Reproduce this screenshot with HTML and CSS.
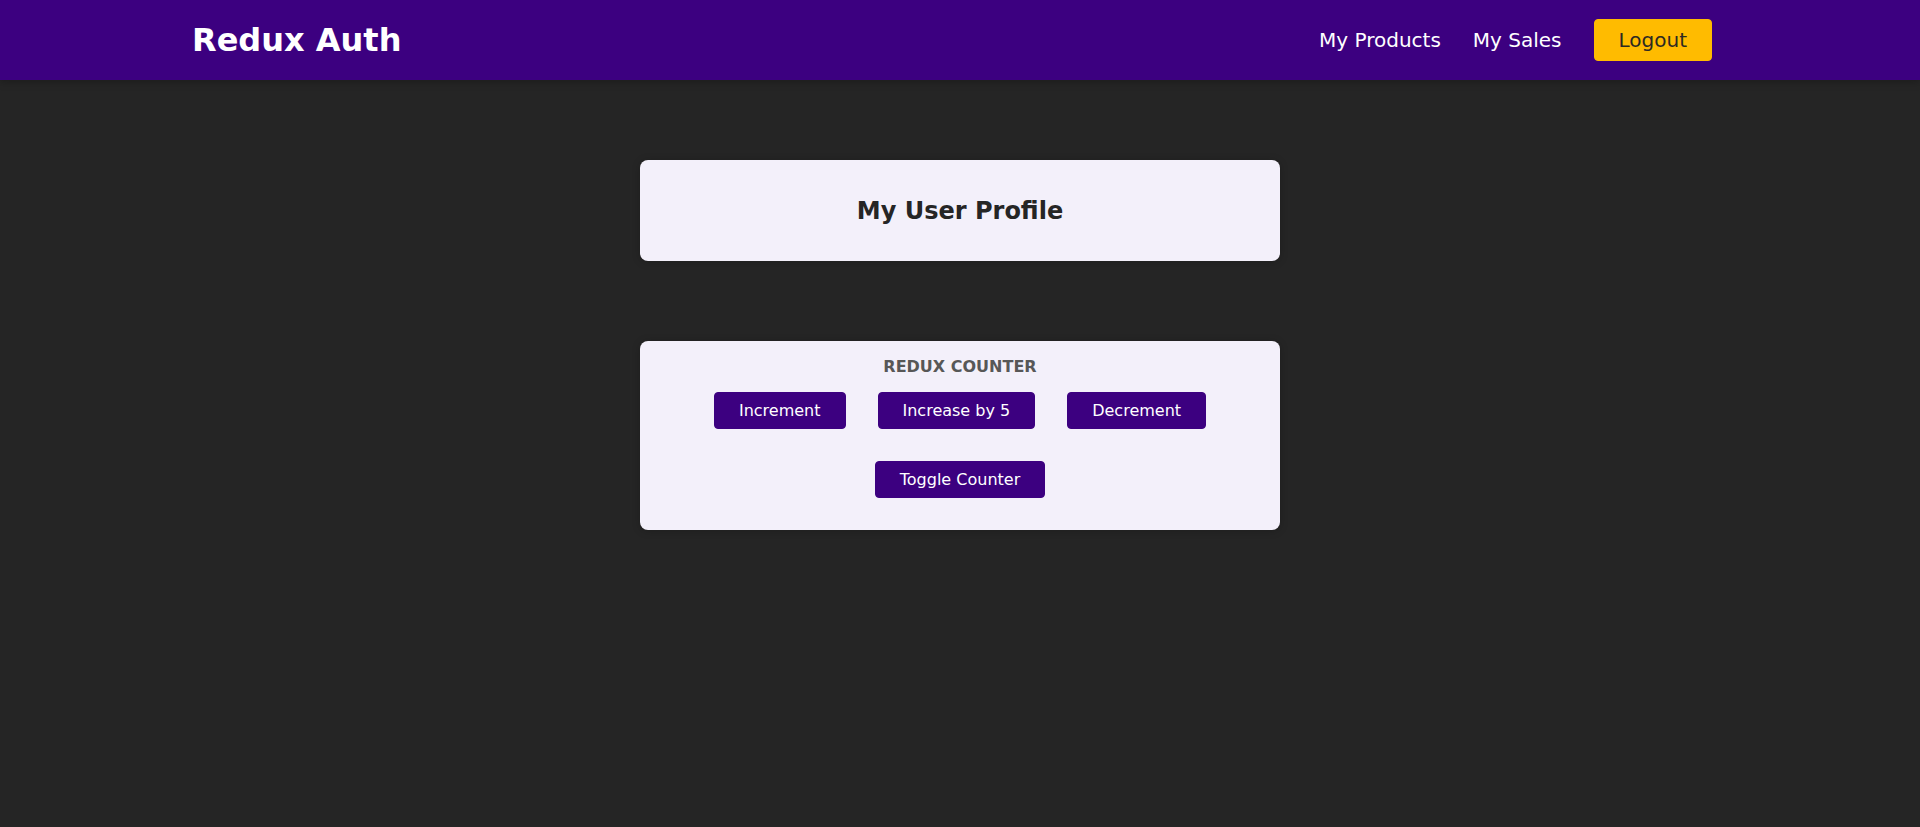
FILE: index.html
```html
<!DOCTYPE html>
<html lang="en">
<head>
<meta charset="utf-8">
<title>Redux Auth</title>
<link rel="stylesheet" href="styles.css">
</head>
<body>
<header class="header">
  <h1 class="brand">Redux Auth</h1>
  <nav>
    <ul class="nav-list">
      <li><a href="#">My Products</a></li>
      <li><a href="#">My Sales</a></li>
      <li><button class="logout">Logout</button></li>
    </ul>
  </nav>
</header>
<main>
  <section class="profile">
    <h2 class="profile-title">My User Profile</h2>
  </section>
  <section class="counter">
    <h1 class="counter-title">Redux Counter</h1>
    <div class="counter-actions">
      <button class="btn">Increment</button>
      <button class="btn">Increase by 5</button>
      <button class="btn">Decrement</button>
    </div>
    <button class="btn toggle">Toggle Counter</button>
  </section>
</main>
</body>
</html>
```
FILE: styles.css
```css
* { box-sizing: border-box; }

html, body {
  margin: 0;
  font-family: "DejaVu Sans", sans-serif;
  background-color: #252525;
}

.header {
  width: 100%;
  height: 80px;
  display: flex;
  justify-content: space-between;
  align-items: center;
  padding: 0 10%;
  background-color: #3c0080;
  box-shadow: 0 2px 8px rgba(0, 0, 0, 0.25);
}

.brand {
  margin: 0;
  color: #ffffff;
  font-size: 32px;
  font-weight: bold;
}

.nav-list {
  list-style: none;
  margin: 0;
  padding: 0;
  display: flex;
  align-items: center;
}

.nav-list li { margin: 0 16px; }

.nav-list a {
  color: #ffffff;
  text-decoration: none;
  font-size: 20px;
}

.logout {
  font-family: inherit;
  font-size: 20px;
  line-height: normal;
  background-color: #ffbb00;
  border: 1px solid #ffbb00;
  padding: 8px 24px;
  border-radius: 4px;
  color: #2c2922;
  cursor: pointer;
}

.profile {
  margin: 80px auto;
  width: 640px;
  max-width: 90%;
  padding: 37px 16px 35px;
  border-radius: 8px;
  box-shadow: 0 1px 8px rgba(0, 0, 0, 0.2);
  background-color: #f3f0fa;
  text-align: center;
}

.profile-title {
  margin: 0;
  font-size: 24px;
  line-height: 29px;
  color: #252525;
}

.counter {
  margin: 80px auto;
  width: 640px;
  max-width: 90%;
  padding: 16px 16px 32px;
  border-radius: 8px;
  box-shadow: 0 1px 8px rgba(0, 0, 0, 0.2);
  background-color: #f3f0fa;
  text-align: center;
}

.counter-title {
  margin: 0 0 16px;
  text-transform: uppercase;
  color: #575757;
  font-size: 16px;
  line-height: normal;
}

.counter-actions {
  display: flex;
  justify-content: center;
  gap: 32px;
  margin-bottom: 32px;
}

.btn {
  font-family: inherit;
  font-size: 16px;
  line-height: normal;
  background-color: #3c0080;
  border: 1px solid #3c0080;
  color: #ffffff;
  padding: 8px 24px;
  border-radius: 4px;
  cursor: pointer;
}

.toggle { display: inline-block; }
```
